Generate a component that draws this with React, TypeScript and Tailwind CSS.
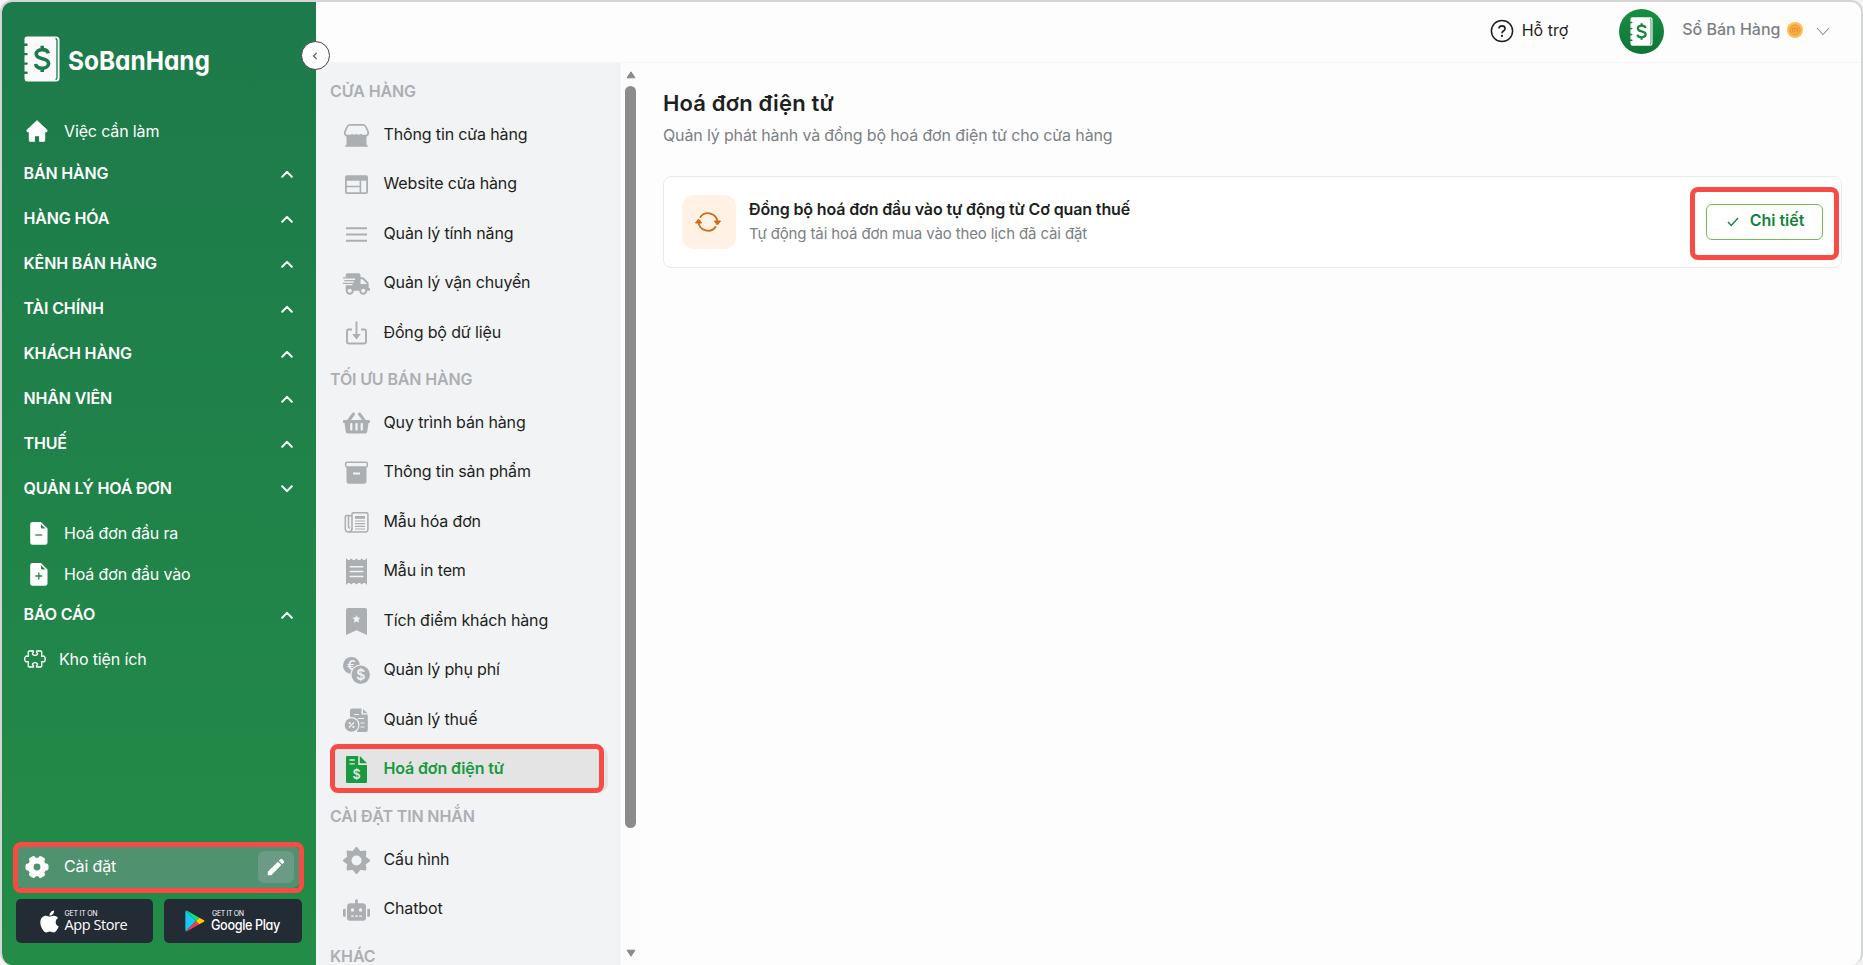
import React from "react";
import { FaApple, FaRobot, FaShippingFast, FaShoppingBasket } from "react-icons/fa";
import { MdModeEdit } from "react-icons/md";

const GREY = "#abafb2";
const PANEL = "#f2f3f5";

function starPoints(n: number, outer: number, inner: number, c: number) {
  return Array.from({ length: n * 2 }, (_, i) => {
    const r = i % 2 === 0 ? outer : inner;
    const a = (Math.PI * i) / n - Math.PI / 2;
    return `${(c + r * Math.cos(a)).toFixed(2)},${(c + r * Math.sin(a)).toFixed(2)}`;
  }).join(" ");
}

/* ---------- notebook logo ---------- */
function Notebook({ className, fill, ink }: { className: string; fill: string; ink: string }) {
  return (
    <svg viewBox="0 0 36 46" className={className}>
      <path
        fill={fill}
        d="M3 .5H32a3.5 3.5 0 0 1 3.5 3.5V42a3.5 3.5 0 0 1-3.5 3.5H3A3 3 0 0 1 .5 42.500V38H2.600a1.200 1.200 0 0 0 0-2.400H.5V28.800H2.600a1.200 1.200 0 0 0 0-2.400H.5V19.300H2.600a1.200 1.200 0 0 0 0-2.400H.5V10H2.600a1.200 1.200 0 0 0 0-2.400H.5V3A2.500 2.500 0 0 1 3 .5Z"
      />
      <path d="M31.500 2.500a2 2 0 0 1 1.500 2V41.500a2 2 0 0 1-1.500 2" fill="none" stroke={ink} strokeWidth="1.300" />
      <path
        d="M24.300 17.300C23.800 14.900 21.400 13.600 18.200 13.600C14.600 13.600 12.200 15.500 12.200 18.100C12.200 24.600 24.600 20.900 24.600 27.500C24.600 30.300 22 32.200 18.300 32.200C14.700 32.200 12 30.700 11.600 28M18.200 9.800V13.500M18.200 32V36"
        fill="none"
        stroke={ink}
        strokeWidth="3.600"
        strokeLinecap="butt"
      />
    </svg>
  );
}

/* ---------- sidebar icons ---------- */
const HomeIcon = () => (
  <svg viewBox="0 0 22 22" className="size-[22px]">
    <path
      fill="#fff"
      stroke="#fff"
      strokeWidth="1.200"
      strokeLinejoin="round"
      d="M11 1L21 10.500L20.500 11.600H18.600V20.200Q18.600 21.200 17.600 21.200H13.700V15.600H8.300V21.200H4.400Q3.400 21.200 3.400 20.200V11.600H1.500L1 10.500Z"
    />
  </svg>
);

const DocIcon = ({ plus }: { plus?: boolean }) => (
  <svg viewBox="0 0 18 23" className="h-[23px] w-[18px]">
    <path fill="#fff" d="M2.500 0H11L17.500 6.500V20.500A2.300 2.300 0 0 1 15.200 22.800H2.500A2.300 2.300 0 0 1 .2 20.500V2.300A2.300 2.300 0 0 1 2.500 0Z" />
    <path fill="#228548" d="M11 2.200V5.500Q11 6.500 12 6.500H15.300Z" />
    <path stroke="#228548" strokeWidth="1.300" d={plus ? "M5.300 13H12.300M8.800 9.500V16.500" : "M5.300 13H12.300"} />
  </svg>
);

const PuzzleIcon = () => (
  <svg viewBox="0 0 22 18" className="h-[18px] w-[22px]">
    <path
      fill="none"
      stroke="#fff"
      strokeWidth="1.400"
      strokeLinejoin="round"
      d="M4.300 6.400V2Q4.300 1 5.300 1H9.400V2.300C7.600 3.200 8.600 5.400 11 5.400S14.400 3.200 12.600 2.300V1H16.700Q17.700 1 17.700 2V6.400H18.800C19.600 5.600 21.300 6.500 21.300 9S19.600 12.400 18.800 11.600H17.700V16Q17.700 17 16.700 17H12.600V15.700C14.400 14.800 13.400 12.600 11 12.600S7.600 14.800 9.400 15.700V17H5.300Q4.300 17 4.300 16V11.600H3.200C2.400 12.400 .7 11.500 .7 9S2.400 5.600 3.200 6.400Z"
    />
  </svg>
);

const FlowerGear = () => (
  <svg viewBox="-12 -12 24 24" className="size-6">
    <g fill="#fff">
      <circle r="9.200" />
      {[0, 60, 120, 180, 240, 300].map((a) => (
        <rect key={a} x="4" y="-3.500" width="7.500" height="7" rx="2.200" transform={`rotate(${a})`} />
      ))}
    </g>
    <circle r="3.400" fill="#50926f" />
  </svg>
);

const Chevron = ({ down }: { down?: boolean }) => (
  <svg viewBox="0 0 12 8" className="h-2 w-3">
    <path d={down ? "M1.200 1.300L6 6.100L10.800 1.300" : "M1.200 6.700L6 1.900L10.800 6.700"} fill="none" stroke="#fff" strokeWidth="2" strokeLinecap="round" strokeLinejoin="round" />
  </svg>
);

/* ---------- settings icons ---------- */
const StoreIcon = () => (
  <svg viewBox="0 0 27 27" className="size-[27px]">
    <path fill="none" stroke={GREY} strokeWidth="1.700" strokeLinejoin="round" d="M6.800 2.800H20.200Q22 2.900 22.700 4.600L24.400 8.200Q26.500 11.900 23.500 13.700H3.500Q.5 11.900 2.600 8.200L4.300 4.600Q5 2.900 6.800 2.800Z" />
    <path
      fill={GREY}
      d="M3 13.200Q6.200 15.300 8 12.400L9.200 11.700Q11.300 14.300 13.500 11.700Q15.700 14.300 17.800 11.700L19 12.400Q20.800 15.300 24 13.200L23.500 14V22.500Q24.800 23 24.800 24.800H2.200Q2.200 23 3.500 22.500V14Z"
    />
  </svg>
);

const WebIcon = () => (
  <svg viewBox="0 0 27 27" className="size-[27px]">
    <path fill={GREY} fillRule="evenodd" d="M4 4.300H23A2 2 0 0 1 25 6.300V21A2 2 0 0 1 23 23H4A2 2 0 0 1 2 21V6.300A2 2 0 0 1 4 4.300ZM3.800 9.800V14.700H16.600V9.800ZM3.800 16.200V21.300H16.600V16.200ZM18.200 9.800V21.300H23.200V9.800Z" />
  </svg>
);

const MenuIcon = () => (
  <svg viewBox="0 0 27 27" className="size-[27px]">
    <path stroke={GREY} strokeWidth="2" d="M3 7.300H24M3 13.500H24M3 19.700H24" />
  </svg>
);

const DownloadIcon = () => (
  <svg viewBox="0 0 27 27" className="size-[27px]">
    <path fill="none" stroke={GREY} strokeWidth="1.900" d="M9 9.500H5.500Q4 9.500 4 11V22Q4 23.500 5.500 23.500H21.500Q23 23.500 23 22V11Q23 9.500 21.500 9.500H18M13.500 1.500V15" />
    <path fill={GREY} d="M9.200 14H17.800L13.500 19.500Z" />
  </svg>
);

const ArchiveIcon = () => (
  <svg viewBox="0 0 27 27" className="size-[27px]">
    <rect x="2.700" y="3.200" width="21.600" height="4.800" rx="1.300" fill="none" stroke={GREY} strokeWidth="1.500" />
    <path fill={GREY} fillRule="evenodd" d="M3.500 8H23.500V22.500Q23.500 24.800 21.200 24.800H5.800Q3.500 24.800 3.500 22.500ZM10 13.500V15.500H17V13.500Z" />
  </svg>
);

const NewsIcon = () => (
  <svg viewBox="0 0 27 27" className="size-[27px]">
    <g fill="none" stroke={GREY} strokeWidth="1.500">
      <path d="M9 20.500V5Q9 3.800 10.200 3.800H23.700Q24.900 3.800 24.900 5V20.500Q24.900 22.900 22.500 22.900H5.500Q2.300 22.900 2.300 19.800V8.500Q2.300 6.500 4 6.500H5.500V17Q5.500 19 7 19.300" />
      <path d="M5.600 6.700H9M9 19Q9 22.900 5.500 22.900" />
      <path d="M12 12H22M12 14.700H22M12 17.400H22M12 20H22" strokeWidth="1.200" />
    </g>
    <path fill={GREY} d="M12 7H22V9.800H12Z" />
  </svg>
);

const ReceiptIcon = () => (
  <svg viewBox="0 0 27 27" className="size-[27px]">
    <path
      fill={GREY}
      d="M3 0L5 2L6.500 2L8.200 .6L10 2H11.700L13.500 .6L15.300 2H17L18.800 .6L20.500 2H22L24 0V27L22 25H20.500L18.800 26.400L17 25H15.300L13.500 26.400L11.700 25H10L8.200 26.400L6.500 25H5L3 27Z"
    />
    <path stroke={PANEL} strokeWidth="1.500" strokeLinecap="round" d="M7.200 8.700H19.800M7.200 13.600H19.800M7.200 18.500H19.800" />
  </svg>
);

const BookmarkIcon = () => (
  <svg viewBox="0 0 27 27" className="size-[27px]">
    <path fill={GREY} d="M5 0H22Q24 0 24 2V27L13.500 22.300L3 27V2Q3 0 5 0Z" />
    <polygon points={starPoints(5, 4.300, 2, 13.500)} transform="translate(0 -2.300)" fill={PANEL} />
  </svg>
);

const CoinsIcon = () => (
  <svg viewBox="0 0 27 27" className="size-[27px]">
    <circle cx="8.500" cy="8.500" r="8.500" fill={GREY} />
    <text x="8.300" y="13.200" textAnchor="middle" fill={PANEL} className="font-[Inter] text-[13px] font-semibold">€</text>
    <circle cx="17.700" cy="17.700" r="10.300" fill={PANEL} />
    <circle cx="17.700" cy="17.700" r="9.200" fill={GREY} />
    <text x="17.700" y="22.700" textAnchor="middle" fill={PANEL} className="font-[Inter] text-[14px] font-semibold">$</text>
  </svg>
);

const TaxIcon = () => (
  <svg viewBox="0 0 27 27" className="size-[27px]">
    <path fill={GREY} d="M9 1.500H18.500V7.500H24.800V23Q24.800 25 22.800 25H14V12H7V3.500Q7 1.500 9 1.500Z" />
    <path fill={GREY} d="M20 2L24.500 6.300H20Z" />
    <path stroke={PANEL} strokeWidth="1.200" d="M11 7.500H16M15 11.500H21M17.500 16H21.500M17.500 20H21.500" />
    <circle cx="8.500" cy="18" r="8" fill={PANEL} />
    <circle cx="8.500" cy="18" r="6.800" fill={GREY} />
    <path stroke={PANEL} strokeWidth="1.200" d="M6 20.500L11 15.500" />
    <circle cx="6.700" cy="16.200" r="1.100" fill={PANEL} />
    <circle cx="10.400" cy="19.900" r="1.100" fill={PANEL} />
  </svg>
);

const InvoiceIcon = () => (
  <svg viewBox="0 0 27 27" className="size-[27px]">
    <path fill="#189a3e" d="M4 0H15.200V9H24V26Q24 27 23 27H4Q3 27 3 26V1Q3 0 4 0Z" />
    <path fill="#189a3e" d="M16.800 0L24 7.300H16.800Z" />
    <path stroke="#e4e4e4" strokeWidth="1.300" d="M6.500 4H11.800M6.500 7.800H11.800" />
    <text x="13.500" y="22.500" textAnchor="middle" fill="#e4e4e4" className="font-[Inter] text-[12.5px] font-semibold">$</text>
  </svg>
);

const CogIcon = () => (
  <svg viewBox="0 0 27 27" className="size-[27px]">
    <polygon points={starPoints(8, 12.200, 8.700, 13.500)} fill={GREY} stroke={GREY} strokeWidth="2.600" strokeLinejoin="round" />
    <circle cx="13.500" cy="13.500" r="5" fill={PANEL} />
  </svg>
);

const SyncIcon = () => (
  <svg viewBox="0 0 26 22" className="-ml-0.5 h-[22px] w-[26px]">
    <path fill="none" stroke="#cf6c14" strokeWidth="1.800" d="M5 6.700A9.500 9.500 0 0 1 22.500 11M3.500 11A9.500 9.500 0 0 0 21 15.300" />
    <path fill="#cf6c14" stroke="#cf6c14" strokeLinejoin="round" d="M19.300 10H25.500L22.400 14ZM.5 12H6.700L3.600 8Z" />
  </svg>
);

const menu = [
  "BÁN HÀNG",
  "HÀNG HÓA",
  "KÊNH BÁN HÀNG",
  "TÀI CHÍNH",
  "KHÁCH HÀNG",
  "NHÂN VIÊN",
  "THUẾ",
  "QUẢN LÝ HOÁ ĐƠN",
];

type Item = { label: string; icon: React.ReactNode; active?: boolean };
const sections: { title: string; items: Item[] }[] = [
  {
    title: "CỬA HÀNG",
    items: [
      { label: "Thông tin cửa hàng", icon: <StoreIcon /> },
      { label: "Website cửa hàng", icon: <WebIcon /> },
      { label: "Quản lý tính năng", icon: <MenuIcon /> },
      { label: "Quản lý vận chuyển", icon: <FaShippingFast className="h-[22px] w-[27px] text-[#abafb2]" /> },
      { label: "Đồng bộ dữ liệu", icon: <DownloadIcon /> },
    ],
  },
  {
    title: "TỐI ƯU BÁN HÀNG",
    items: [
      { label: "Quy trình bán hàng", icon: <FaShoppingBasket className="h-[24px] w-[27px] text-[#abafb2]" /> },
      { label: "Thông tin sản phẩm", icon: <ArchiveIcon /> },
      { label: "Mẫu hóa đơn", icon: <NewsIcon /> },
      { label: "Mẫu in tem", icon: <ReceiptIcon /> },
      { label: "Tích điểm khách hàng", icon: <BookmarkIcon /> },
      { label: "Quản lý phụ phí", icon: <CoinsIcon /> },
      { label: "Quản lý thuế", icon: <TaxIcon /> },
      { label: "Hoá đơn điện tử", icon: <InvoiceIcon />, active: true },
    ],
  },
  {
    title: "CÀI ĐẶT TIN NHẮN",
    items: [
      { label: "Cấu hình", icon: <CogIcon /> },
      { label: "Chatbot", icon: <FaRobot className="h-[22px] w-[27px] text-[#abafb2]" /> },
    ],
  },
  { title: "KHÁC", items: [] },
];

function MenuHeading({ label, down }: { label: string; down?: boolean }) {
  return (
    <div className="flex h-[45px] shrink-0 items-center justify-between pr-[23px] pl-[21.5px] text-base font-semibold">
      <span>{label}</span>
      <span className="flex pt-0.5">
        <Chevron down={down} />
      </span>
    </div>
  );
}

function Sidebar() {
  return (
    <aside className="relative flex w-[314px] shrink-0 flex-col bg-linear-to-b from-[#1d7a4b] to-[#238c47] tracking-[-0.14px] text-white">
      <div className="flex h-[110px] items-start gap-[7px] pt-[34px] pl-[22px]">
        <Notebook className="h-[46px] w-9" fill="#fafafa" ink="#1d7a4b" />
        <svg className="h-[52px] w-[180px] overflow-visible" viewBox="0 0 180 52">
          <text x="1" y="34" textLength="142" lengthAdjust="spacingAndGlyphs" fill="#fff" className="font-[Inter] text-[26px] font-bold tracking-normal [font-feature-settings:'cv11']">
            SoBanHang
          </text>
        </svg>
      </div>
      <div className="flex h-[38px] items-center gap-4 pl-6">
        <HomeIcon />
        <span className="pb-px text-base">Việc cần làm</span>
      </div>
      <div className="flex flex-col">
        {menu.map((m, i) => (
          <MenuHeading key={m} label={m} down={i === 7} />
        ))}
      </div>
      <div className="flex h-[81px] flex-col pt-[3px]">
        <div className="flex h-[41px] shrink-0 items-center gap-4 pl-7">
          <DocIcon />
          <span className="pb-px text-base">Hoá đơn đầu ra</span>
        </div>
        <div className="flex h-[41px] shrink-0 items-center gap-4 pl-7">
          <DocIcon plus />
          <span className="pb-px text-base">Hoá đơn đầu vào</span>
        </div>
      </div>
      <MenuHeading label="BÁO CÁO" />
      <div className="flex h-[45px] items-center gap-[13px] pl-[22px]">
        <PuzzleIcon />
        <span className="text-base">Kho tiện ích</span>
      </div>
      <div className="mt-auto mr-4 ml-[13px] flex h-[42px] items-center rounded-lg bg-[#50926f] pr-1.5 pl-2.5">
        <FlowerGear />
        <span className="flex-1 pb-[3px] pl-[15px] text-base">Cài đặt</span>
        <span className="flex h-8 w-9 items-center justify-center rounded-md bg-[#6b9a87]">
          <MdModeEdit className="size-[22px]" />
        </span>
      </div>
      <div className="mt-[11px] mb-[22px] flex gap-[11px] px-3.5">
        <div className="flex h-11 w-[137px] items-center rounded-[5px] bg-[#232b35] pl-[21px]">
          <FaApple className="size-[25px]" />
          <svg viewBox="0 0 72 30" className="h-[30px] w-[72px]">
            <text x="2.500" y="10" textLength="33" fill="#fff" className="font-[Inter] text-[7px]">GET IT ON</text>
            <text x="2.500" y="24" textLength="63" fill="#fff" className="font-['Open_Sans'] text-[14.5px] font-medium">App Store</text>
          </svg>
        </div>
        <div className="flex h-11 w-[139px] items-center rounded-[5px] bg-[#232b35] pl-[21px]">
          <svg viewBox="0 0 20 22" className="h-[22px] w-5">
            <path fill="#14c9f5" d="M.8 .8L11 11L.8 21.200Q.4 21 .4 20V2Q.4 1 .8 .8Z" />
            <path fill="#11e07a" d="M.8 .8Q1.600 .3 2.600 .9L14.300 7.700L11 11Z" />
            <path fill="#ee3e50" d="M.8 21.200Q1.600 21.700 2.600 21.100L14.300 14.300L11 11Z" />
            <path fill="#ffcc04" d="M14.300 7.700L19 10.300Q20 11 19 11.700L14.300 14.300L11 11Z" />
          </svg>
          <svg viewBox="0 0 76 30" className="ml-1.5 h-[30px] w-[76px]">
            <text x="1" y="10" textLength="32" fill="#fff" className="font-[Inter] text-[7px]">GET IT ON</text>
            <text x="0" y="24" textLength="69" lengthAdjust="spacingAndGlyphs" fill="#fff" className="font-[Inter] text-[14px] font-medium tracking-[-0.4px] [font-feature-settings:'cv11']">Google Play</text>
          </svg>
        </div>
      </div>
      <div className="absolute top-[840px] left-[11px] h-[51px] w-[291px] rounded-lg border-5 border-[#f94b46]" />
      <button className="absolute top-[39px] left-[299px] z-10 flex size-[29px] items-center justify-center rounded-full border border-[#444] bg-white">
        <svg viewBox="0 0 6 8" className="-ml-0.5 h-2 w-1.5">
          <path d="M4.600 1L1.500 4L4.600 7" fill="none" stroke="#666" strokeWidth="1.300" />
        </svg>
      </button>
    </aside>
  );
}

function SettingsPanel() {
  return (
    <div className="flex min-h-0 shrink-0 tracking-[-0.14px]">
      <div className="w-[305px] overflow-hidden bg-[#f2f3f5] pt-[6.5px] pr-[13px] pl-3.5">
        {sections.map((s) => (
          <div key={s.title}>
            <div className="flex h-[40.75px] items-center pt-0.5 text-base font-semibold text-[#abafb2]">{s.title}</div>
            {s.items.map((it) => (
              <div key={it.label} className="flex h-[49.5px] items-center">
                <div
                  className={
                    it.active
                      ? "relative flex h-[44px] w-full items-center gap-[13.5px] rounded-lg bg-[#e4e4e4] pl-[13px] font-semibold text-[#189a3e]"
                      : "flex h-[44px] w-full items-center gap-[13.5px] rounded-lg pl-[13px] text-[#1d1f21]"
                  }
                >
                  <span className="flex w-[27px] justify-center">{it.icon}</span>
                  <span className="pb-[3px] text-base">{it.label}</span>
                  {it.active && <div className="absolute -top-1 left-0 h-[49px] w-[274px] rounded-lg border-5 border-[#f94b46]" />}
                </div>
              </div>
            ))}
          </div>
        ))}
      </div>
      <div className="flex w-[19px] flex-col items-center bg-[#fcfcfc] pt-2 pb-[8px]">
        <svg viewBox="0 0 10 8" className="h-2 w-2.5 shrink-0">
          <path d="M5 .8L9 6.800H1Z" fill="#8b8b8b" stroke="#8b8b8b" strokeLinejoin="round" />
        </svg>
        <div className="mt-[7px] h-[742px] w-[11px] shrink-0 rounded-full bg-[#8b8b8b]" />
        <svg viewBox="0 0 10 8" className="mt-auto h-2 w-2.5 shrink-0">
          <path d="M5 7.200L9 1.200H1Z" fill="#8b8b8b" stroke="#8b8b8b" strokeLinejoin="round" />
        </svg>
      </div>
    </div>
  );
}

function Header() {
  return (
    <header className="flex h-[61px] shrink-0 items-center border-b border-dotted border-[#ededed] pr-[31px] pb-0.5">
      <div className="ml-auto flex items-center gap-2">
        <svg viewBox="0 0 24 24" className="size-6">
          <circle cx="12" cy="12" r="10.600" fill="none" stroke="#1d1f21" strokeWidth="1.500" />
          <path d="M9 9.600Q9 6.900 12 6.900T15 9.500Q15 11.100 13.500 11.900Q12 12.700 12 14.300" fill="none" stroke="#1d1f21" strokeWidth="1.700" />
          <circle cx="12" cy="16.900" r="1.100" fill="#1d1f21" />
        </svg>
        <span className="pb-0.5 text-base text-[#1d1f21]">Hỗ trợ</span>
      </div>
      <div className="ml-[51px] flex size-[45px] items-center justify-center rounded-full bg-linear-to-b from-[#178f43] to-[#117338]">
        <Notebook className="h-[29px] w-[23px]" fill="#fff" ink="#17853f" />
      </div>
      <span className="-mt-1 ml-[18px] text-base font-medium text-[#7b8085]">Sổ Bán Hàng</span>
      <svg viewBox="0 0 16 16" className="-mt-0.5 ml-[6px] size-4">
        <circle cx="8" cy="8" r="8" fill="#fcc051" />
        <circle cx="8" cy="8" r="5.200" fill="#f5aa45" stroke="#ef9a3c" />
        <path d="M5.500 10V7Q5.500 6.200 6.700 6.200T8 7V10M8 7Q8 6.200 9.300 6.200T10.500 7V10" fill="none" stroke="#e8893a" strokeWidth=".9" />
      </svg>
      <svg viewBox="0 0 14 9" className="ml-[13.5px] h-[9px] w-3.5">
        <path d="M1 1L7 7.500L13 1" fill="none" stroke="#8d9195" strokeWidth="1.100" />
      </svg>
    </header>
  );
}

export default function App() {
  return (
    <div className="h-[965px] w-[1863px] overflow-hidden bg-[#f4f4f4] font-[Inter,sans-serif]">
      <div className="flex h-full overflow-hidden rounded-xl border-x-2 border-t-2 border-[#d4d6d5] bg-[#fdfdfd]">
        <Sidebar />
        <div className="flex min-w-0 flex-1 flex-col">
          <Header />
          <div className="flex min-h-0 flex-1">
            <SettingsPanel />
            <main className="flex min-w-0 flex-1 flex-col pt-6 pr-[19px] pl-[23px]">
              <h1 className="text-[22px] leading-8 font-semibold tracking-[0.15px] text-[#1d1f21]">Hoá đơn điện tử</h1>
              <p className="mt-1 text-base leading-6 tracking-[-0.14px] text-[#7b8085]">Quản lý phát hành và đồng bộ hoá đơn điện tử cho cửa hàng</p>
              <section className="mt-[29px] flex h-[92px] items-center rounded-lg border border-[#e9eaeb] bg-white pr-[18px] pl-[18px]">
                <div className="flex size-[54px] items-center justify-center rounded-xl bg-[#fff1e4]">
                  <SyncIcon />
                </div>
                <div className="flex flex-1 flex-col pl-[13px] tracking-[-0.13px]">
                  <span className="-mt-px text-base leading-6 font-semibold text-[#1d1f21]">Đồng bộ hoá đơn đầu vào tự động từ Cơ quan thuế</span>
                  <span className="mt-px text-[15px] leading-6 text-[#7b8085]">Tự động tải hoá đơn mua vào theo lịch đã cài đặt</span>
                </div>
                <div className="relative flex">
                  <button className="flex h-9 w-[117px] items-center justify-center gap-[11px] rounded-md border border-[#72bd51] text-[#14833b]">
                    <svg viewBox="0 0 12 10" className="ml-0.5 h-2.5 w-3">
                      <path d="M1 5L4.300 8.500L11 1" fill="none" stroke="#14833b" strokeWidth="1.400" />
                    </svg>
                    <span className="pb-1 text-base font-semibold">Chi tiết</span>
                  </button>
                  <div className="absolute -top-[17px] -left-4 h-[73px] w-[149px] rounded-lg border-5 border-[#f94b46]" />
                </div>
              </section>
            </main>
          </div>
        </div>
      </div>
    </div>
  );
}
